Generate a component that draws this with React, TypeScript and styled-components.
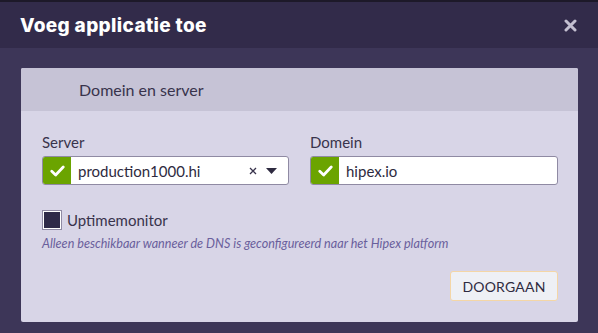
import React, { useState } from 'react';
import styled, { createGlobalStyle } from 'styled-components';

const GlobalStyle = createGlobalStyle`
  html, body {
    margin: 0;
    padding: 0;
    background: #3d3658;
    font-family: Lato, "Noto Sans", sans-serif;
  }
`;

const Page = styled.div`
  width: 598px;
  height: 333px;
  overflow: hidden;
  background: #3d3658;
  display: flex;
  flex-direction: column;
`;

const BehindStrip = styled.div`
  height: 2px;
  background: #1d1929;
`;

const ModalHeader = styled.div`
  height: 46px;
  background: #322b4a;
  display: flex;
  align-items: center;
  justify-content: space-between;
  padding: 0 20px 0 20px;
`;

const Title = styled.h1`
  margin: 0;
  font-family: Inter, "Open Sans", sans-serif;
  font-weight: 800;
  font-size: 19px;
  letter-spacing: 0.35px;
  color: #ffffff;
`;

const CloseButton = styled.button`
  border: 0;
  background: none;
  padding: 0;
  width: 16px;
  height: 16px;
  display: flex;
  align-items: center;
  justify-content: center;
  cursor: pointer;
`;

const ModalBody = styled.div`
  padding: 20px 20px 0 21px;
`;

const Card = styled.div`
  background: #d8d5e7;
  border-radius: 2px;
  height: 254px;
  display: flex;
  flex-direction: column;
`;

const CardHeader = styled.div`
  height: 43px;
  background: #c6c3d6;
  display: flex;
  align-items: center;
  padding-left: 58px;
  font-size: 16px;
  color: #38334c;
  border-radius: 2px 2px 0 0;
`;

const CardContent = styled.div`
  padding: 21px 20px 0 21px;
  display: flex;
  flex-direction: column;
`;

const FieldRow = styled.div`
  display: grid;
  grid-template-columns: 247px 248px;
  column-gap: 21px;
`;

const Field = styled.div`
  display: flex;
  flex-direction: column;
`;

const Label = styled.label`
  font-size: 15px;
  color: #38334c;
  line-height: 20px;
  margin-bottom: 4px;
`;

const InputBox = styled.div`
  height: 29px;
  box-sizing: border-box;
  border: 1px solid #8f8aa3;
  border-radius: 3px;
  background: #ffffff;
  display: flex;
  align-items: stretch;
  overflow: hidden;
`;

const ValidBadge = styled.div`
  width: 28px;
  background: #6ba400;
  display: flex;
  align-items: center;
  justify-content: center;
  flex-shrink: 0;
`;

const Value = styled.div`
  flex: 1;
  display: flex;
  align-items: center;
  padding-left: 7px;
  font-size: 15px;
  color: #2e2a40;
`;

const Controls = styled.div`
  display: flex;
  align-items: center;
  gap: 9px;
  padding-right: 11px;
`;

const CheckRow = styled.div`
  display: flex;
  align-items: center;
  gap: 5px;
  margin-top: 25px;
  font-size: 15px;
  color: #38334c;
`;

const Checkbox = styled.span<{ $checked: boolean }>`
  width: 20px;
  height: 20px;
  box-sizing: border-box;
  border: 2px solid #ffffff;
  outline: 1px solid #8f8aa3;
  outline-offset: -1px;
  background: ${p => (p.$checked ? '#6ba400' : '#2e2a48')};
  cursor: pointer;
`;

const Hint = styled.p`
  margin: 6px 0 0 0;
  font-size: 12.6px;
  font-style: italic;
  color: #6a5f9c;
`;

const Footer = styled.div`
  display: flex;
  justify-content: flex-end;
  margin-top: 20px;
`;

const PrimaryButton = styled.button`
  width: 108px;
  height: 30px;
  background: #eef0f5;
  border: 1px solid #f4d6a6;
  border-radius: 3px;
  font-family: Lato, sans-serif;
  font-size: 14px;
  color: #2e2a40;
  letter-spacing: 0.2px;
  cursor: pointer;
`;

const Check = () => (
  <svg width="15" height="12" viewBox="0 0 16 13">
    <path d="M1.8 6.8 L6 10.8 L14.2 2.2" fill="none" stroke="#fff" strokeWidth="3" strokeLinecap="round" strokeLinejoin="round" />
  </svg>
);

const App: React.FC = () => {
  const [uptime, setUptime] = useState(false);

  return (
    <Page>
      <GlobalStyle />
      <BehindStrip />
      <ModalHeader>
        <Title>Voeg applicatie toe</Title>
        <CloseButton aria-label="Sluiten">
          <svg width="13" height="13" viewBox="0 0 13 13">
            <path d="M2 2 L11 11 M11 2 L2 11" stroke="#c3bfd0" strokeWidth="3" strokeLinecap="round" />
          </svg>
        </CloseButton>
      </ModalHeader>
      <ModalBody>
        <Card>
          <CardHeader>Domein en server</CardHeader>
          <CardContent>
            <FieldRow>
              <Field>
                <Label>Server</Label>
                <InputBox>
                  <ValidBadge><Check /></ValidBadge>
                  <Value>production1000.hi</Value>
                  <Controls>
                    <svg width="8" height="8" viewBox="0 0 8 8">
                      <path d="M1 1 L7 7 M7 1 L1 7" stroke="#38334c" strokeWidth="1.3" />
                    </svg>
                    <svg width="11" height="6" viewBox="0 0 11 6">
                      <path d="M0 0 L11 0 L5.5 6 Z" fill="#2e2a40" />
                    </svg>
                  </Controls>
                </InputBox>
              </Field>
              <Field>
                <Label>Domein</Label>
                <InputBox>
                  <ValidBadge><Check /></ValidBadge>
                  <Value>hipex.io</Value>
                </InputBox>
              </Field>
            </FieldRow>
            <CheckRow>
              <Checkbox $checked={uptime} onClick={() => setUptime(!uptime)} />
              Uptimemonitor
            </CheckRow>
            <Hint>Alleen beschikbaar wanneer de DNS is geconfigureerd naar het Hipex platform</Hint>
            <Footer>
              <PrimaryButton>DOORGAAN</PrimaryButton>
            </Footer>
          </CardContent>
        </Card>
      </ModalBody>
    </Page>
  );
};

export default App;
